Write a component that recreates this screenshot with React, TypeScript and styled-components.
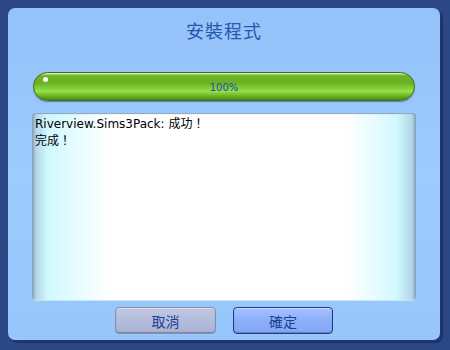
import React from 'react'
import styled, { createGlobalStyle } from 'styled-components'

const GlobalStyle = createGlobalStyle`
  html, body {
    margin: 0;
    padding: 0;
    background: #2c4785;
  }
`

const Screen = styled.div`
  width: 450px;
  height: 350px;
  background: #2c4785;
  padding: 8px 10px 10px 8px;
  box-sizing: border-box;
  font-family: 'Liberation Sans', 'Noto Sans CJK TC', sans-serif;
`

const Dialog = styled.div`
  width: 432px;
  height: 332px;
  background: linear-gradient(180deg, #94c2fa 0%, #9ccbfd 50%, #96c6fb 100%);
  border-radius: 7px;
  box-shadow: 2px 2px 0 #1f3670, 3px 3px 1px rgba(20, 36, 80, 0.6);
  display: flex;
  flex-direction: column;
  align-items: center;
`

const Title = styled.div`
  height: 48px;
  line-height: 48px;
  margin-bottom: 16px;
  font-size: 18px;
  color: #2758ae;
  letter-spacing: 1px;
`

const ProgressBar = styled.div`
  position: relative;
  width: 382px;
  height: 29px;
  box-sizing: border-box;
  border-radius: 15px;
  border: 1px solid #3f7410;
  background: linear-gradient(
    180deg,
    #e6f6d2 0%,
    #6fb424 10%,
    #6cb022 35%,
    #80cc36 55%,
    #92e24a 68%,
    #6eb024 85%,
    #4a8812 100%
  );
  box-shadow: 0 1px 1px rgba(30, 60, 100, 0.5);
  display: flex;
  align-items: center;
  justify-content: center;

  &::before {
    content: '';
    position: absolute;
    left: 9px;
    top: 4px;
    width: 5px;
    height: 5px;
    border-radius: 50%;
    background: #ffffff;
  }
`

const Percent = styled.span`
  font-family: 'DejaVu Sans', sans-serif;
  font-size: 10px;
  color: #1d48bc;
  padding-top: 2px;
`

const Log = styled.div`
  margin-top: 12px;
  width: 384px;
  height: 188px;
  box-sizing: border-box;
  border-radius: 4px;
  padding: 3px 3px;
  background: linear-gradient(
    90deg,
    #7e96ae 0%,
    #b2d6e6 1%,
    #d0f8ff 4%,
    #e8fcff 12%,
    #ffffff 20%,
    #ffffff 82%,
    #e8fcff 89%,
    #d0f8ff 95%,
    #b2d6e6 99%,
    #7e96ae 100%
  );
  box-shadow: inset 0 1px 1px #8aa2b8, inset 0 -1px 1px #c8e4f0;
  font-family: 'DejaVu Sans', 'Noto Sans CJK TC', sans-serif;
  font-size: 12px;
  line-height: 17px;
  color: #000000;
`

const Line = styled.div`
  white-space: nowrap;
`

const Buttons = styled.div`
  margin-top: 6px;
  display: flex;
  gap: 17px;
`

const Button = styled.button<{ $primary?: boolean }>`
  width: ${(p) => (p.$primary ? '100px' : '101px')};
  height: 27px;
  box-sizing: border-box;
  border-radius: 4px;
  border: 1px solid ${(p) => (p.$primary ? '#203c84' : '#8890a8')};
  background: ${(p) =>
    p.$primary
      ? 'linear-gradient(180deg, #a8c2ff 0%, #8eb0fa 45%, #84a6f4 100%)'
      : 'linear-gradient(180deg, #c2c8e2 0%, #b4bcdc 50%, #aab2d4 100%)'};
  box-shadow: inset 0 -1px 1px rgba(40, 50, 90, 0.35), inset 0 1px 0 rgba(255, 255, 255, 0.4);
  font-family: inherit;
  font-size: 14px;
  color: #1d3f92;
  padding: 0;
  cursor: pointer;
`

export default function App() {
  return (
    <Screen>
      <GlobalStyle />
      <Dialog>
        <Title>安裝程式</Title>
        <ProgressBar>
          <Percent>100%</Percent>
        </ProgressBar>
        <Log>
          <Line>Riverview.Sims3Pack: 成功！</Line>
          <Line>完成！</Line>
        </Log>
        <Buttons>
          <Button>取消</Button>
          <Button $primary>確定</Button>
        </Buttons>
      </Dialog>
    </Screen>
  )
}
